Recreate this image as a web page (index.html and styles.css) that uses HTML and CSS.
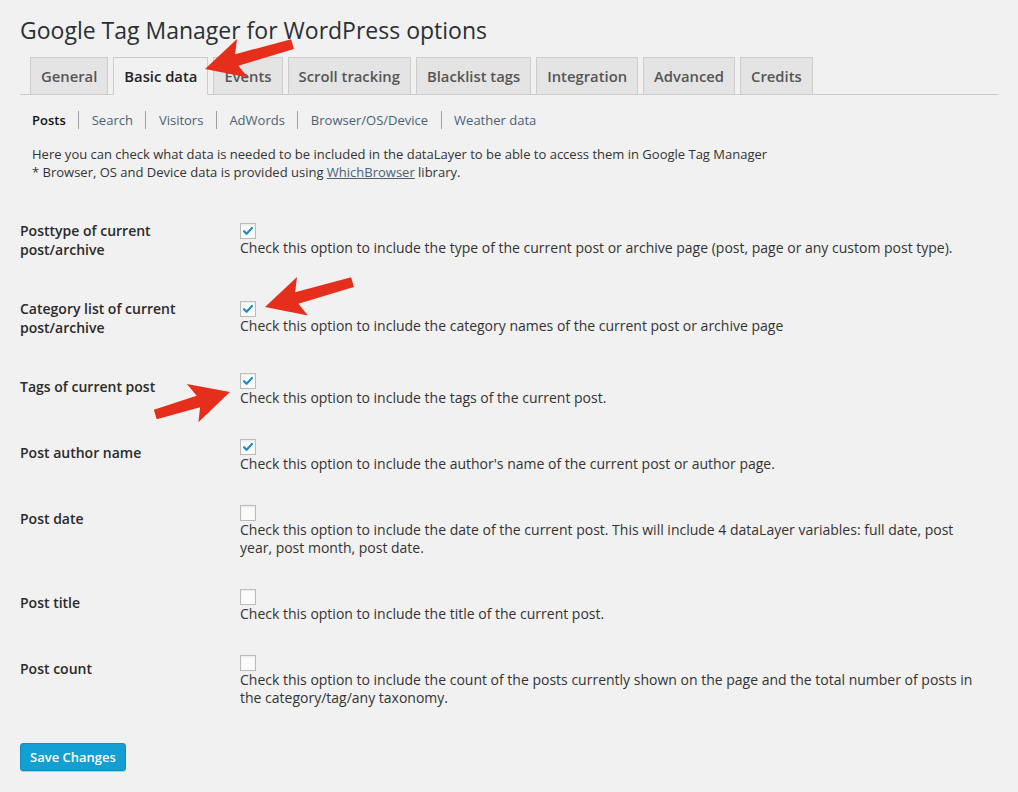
FILE: index.html
```html
<!DOCTYPE html>
<html lang="en">
<head>
<meta charset="utf-8">
<title>Google Tag Manager for WordPress options</title>
<link rel="stylesheet" href="styles.css">
</head>
<body>
<div class="wrap">
  <h1 class="page-title">Google Tag Manager for WordPress options</h1>
  <nav class="tabs">
    <a class="tab" href="#">General</a>
    <a class="tab active" href="#">Basic data</a>
    <a class="tab" href="#">Events</a>
    <a class="tab" href="#">Scroll tracking</a>
    <a class="tab" href="#">Blacklist tags</a>
    <a class="tab" href="#">Integration</a>
    <a class="tab" href="#">Advanced</a>
    <a class="tab" href="#">Credits</a>
  </nav>
  <ul class="subnav">
    <li class="current">Posts</li>
    <li class="sep"></li>
    <li><a href="#">Search</a></li>
    <li class="sep"></li>
    <li><a href="#">Visitors</a></li>
    <li class="sep"></li>
    <li><a href="#">AdWords</a></li>
    <li class="sep"></li>
    <li><a href="#">Browser/OS/Device</a></li>
    <li class="sep"></li>
    <li><a href="#">Weather data</a></li>
  </ul>
  <p class="intro">Here you can check what data is needed to be included in the dataLayer to be able to access them in Google Tag Manager<br>* Browser, OS and Device data is provided using <a href="#">WhichBrowser</a> library.</p>

  <div class="form-table">
    <div class="row">
      <div class="th">Posttype of current post/archive</div>
      <div class="td">
        <span class="cb"><svg class="check" viewBox="0 0 14 14"><path d="M3 7.2 L5.6 9.8 L11 4"/></svg></span>
        <div class="desc">Check this option to include the type of the current post or archive page (post, page or any custom post type).</div>
      </div>
    </div>
    <div class="row">
      <div class="th">Category list of current post/archive</div>
      <div class="td">
        <span class="cb"><svg class="check" viewBox="0 0 14 14"><path d="M3 7.2 L5.6 9.8 L11 4"/></svg></span>
        <div class="desc">Check this option to include the category names of the current post or archive page</div>
      </div>
    </div>
    <div class="row">
      <div class="th">Tags of current post</div>
      <div class="td">
        <span class="cb"><svg class="check" viewBox="0 0 14 14"><path d="M3 7.2 L5.6 9.8 L11 4"/></svg></span>
        <div class="desc">Check this option to include the tags of the current post.</div>
      </div>
    </div>
    <div class="row">
      <div class="th">Post author name</div>
      <div class="td">
        <span class="cb"><svg class="check" viewBox="0 0 14 14"><path d="M3 7.2 L5.6 9.8 L11 4"/></svg></span>
        <div class="desc">Check this option to include the author's name of the current post or author page.</div>
      </div>
    </div>
    <div class="row">
      <div class="th">Post date</div>
      <div class="td">
        <span class="cb"></span>
        <div class="desc">Check this option to include the date of the current post. This will include 4 dataLayer variables: full date, post year, post month, post date.</div>
      </div>
    </div>
    <div class="row">
      <div class="th">Post title</div>
      <div class="td">
        <span class="cb"></span>
        <div class="desc">Check this option to include the title of the current post.</div>
      </div>
    </div>
    <div class="row">
      <div class="th">Post count</div>
      <div class="td">
        <span class="cb"></span>
        <div class="desc">Check this option to include the count of the posts currently shown on the page and the total number of posts in the category/tag/any taxonomy.</div>
      </div>
    </div>
  </div>

  <button class="btn-primary" type="button">Save Changes</button>
</div>

<svg class="annotations" width="1018" height="792" viewBox="0 0 1018 792" aria-hidden="true">
  <defs>
    <polygon id="arrow-long" points="0,0 -39,-20 -33,-6 -91,-5 -91,5 -33,6 -39,20"/>
    <polygon id="arrow-short" points="0,0 -39,-20 -33,-6 -78,-5 -78,5 -33,6 -39,20"/>
  </defs>
  <use href="#arrow-long" transform="translate(205 69) rotate(164.1)"/>
  <use href="#arrow-long" transform="translate(265 307) rotate(164.1)"/>
  <use href="#arrow-short" transform="translate(230 392) rotate(-16.7)"/>
</svg>
</body>
</html>
```

FILE: styles.css
```css
* { box-sizing: border-box; }

html, body {
  margin: 0;
  padding: 0;
}

body {
  position: relative;
  width: 1018px;
  height: 792px;
  overflow: hidden;
  background: #f1f1f1;
  font-family: "Open Sans", "Noto Sans", sans-serif;
  font-size: 13px;
  color: #444;
}

.wrap {
  padding: 16px 20px 0 20px;
}

.page-title {
  margin: 0;
  font-size: 23px;
  line-height: 29px;
  font-weight: 400;
  color: #2b2f33;
}

/* Tabs */
.tabs {
  display: flex;
  align-items: flex-end;
  margin-top: 12px;
  padding-left: 5px;
  border-bottom: 1px solid #ccc;
}

.tab {
  margin-left: 5px;
  padding: 6px 10px;
  border: 1px solid #ccc;
  border-bottom: none;
  background: #e4e4e4;
  color: #555;
  font-size: 14.8px;
  line-height: 24px;
  font-weight: 600;
  text-decoration: none;
}

.tab.active {
  background: #f1f1f1;
  color: #222;
  border-bottom: 1px solid #f1f1f1;
  margin-bottom: -1px;
}

/* Sub navigation */
.subnav {
  display: flex;
  align-items: center;
  list-style: none;
  margin: 12px 0 0 12px;
  padding: 0;
  font-size: 13px;
  line-height: 26px;
}

.subnav a {
  color: #4a6177;
  text-decoration: none;
}

.subnav .current {
  color: #111;
  font-weight: 600;
}

.subnav .sep {
  width: 1px;
  height: 18px;
  margin: 0 12.5px;
  background: #a0a0a0;
}

.intro {
  margin: 12px 0 0 12px;
  font-size: 13px;
  line-height: 18px;
  color: #333;
}

.intro a {
  color: #4a6177;
  text-decoration: underline;
}

/* Form table */
.form-table {
  margin-top: 20px;
}

.row {
  display: grid;
  grid-template-columns: 210px 1fr;
}

.th {
  align-self: start;
  padding: 20px 10px 20px 0;
  font-size: 14px;
  line-height: 19px;
  font-weight: 600;
  color: #2a2a2a;
}

.td {
  align-self: center;
  padding: 16px 10px;
  font-size: 14px;
  line-height: 18px;
  color: #333;
}

.cb {
  display: block;
  width: 16px;
  height: 16px;
  border: 1px solid #bbb;
  background: #fbfbfb;
  box-shadow: inset 0 1px 2px rgba(0, 0, 0, 0.08);
}

.check {
  display: block;
  width: 14px;
  height: 14px;
}

.check path {
  fill: none;
  stroke: #1e8cbe;
  stroke-width: 2.2;
  stroke-linecap: round;
  stroke-linejoin: round;
}

/* Button */
.btn-primary {
  display: block;
  margin-top: 20px;
  height: 28px;
  padding: 0 9px 1px;
  font-family: "Open Sans", "Noto Sans", sans-serif;
  font-size: 13px;
  line-height: 26px;
  font-weight: 600;
  color: #fff;
  background: #139fd1;
  border: 1px solid #0d8fc0;
  border-radius: 3px;
  box-shadow: 0 1px 0 rgba(0, 0, 0, 0.18);
}

/* Annotation overlay */
.annotations {
  position: absolute;
  left: 0;
  top: 0;
  pointer-events: none;
}

.annotations use {
  fill: #e52e1b;
}
```
